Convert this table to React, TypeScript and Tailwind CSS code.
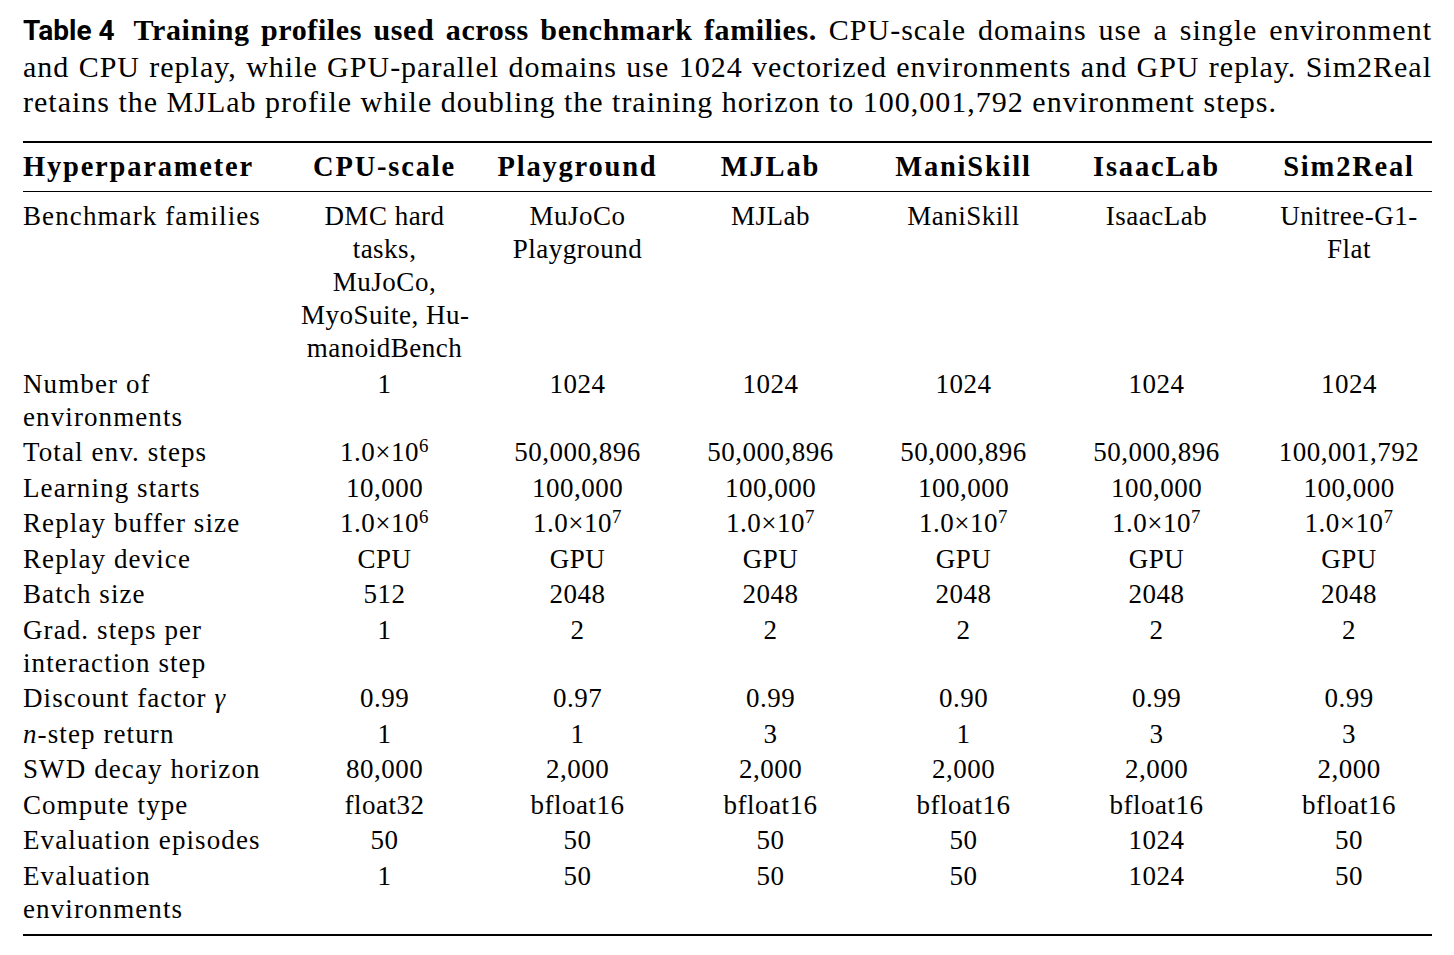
import type { ReactNode } from "react";

type Row = {
  label: ReactNode;
  values: ReactNode[];
};

const sci = (exp: number) => (
  <>
    1.0×10<sup className="text-[0.7em]">{exp}</sup>
  </>
);

const rows: Row[] = [
  {
    label: "Benchmark families",
    values: [
      <>
        DMC hard
        <br />
        tasks,
        <br />
        MuJoCo,
        <br />
        MyoSuite, Hu-
        <br />
        manoidBench
      </>,
      <>
        MuJoCo
        <br />
        Playground
      </>,
      "MJLab",
      "ManiSkill",
      "IsaacLab",
      <>
        Unitree-G1-
        <br />
        Flat
      </>,
    ],
  },
  {
    label: (
      <>
        Number of
        <br />
        environments
      </>
    ),
    values: ["1", "1024", "1024", "1024", "1024", "1024"],
  },
  {
    label: "Total env. steps",
    values: [sci(6), "50,000,896", "50,000,896", "50,000,896", "50,000,896", "100,001,792"],
  },
  {
    label: "Learning starts",
    values: ["10,000", "100,000", "100,000", "100,000", "100,000", "100,000"],
  },
  {
    label: "Replay buffer size",
    values: [sci(6), sci(7), sci(7), sci(7), sci(7), sci(7)],
  },
  {
    label: "Replay device",
    values: ["CPU", "GPU", "GPU", "GPU", "GPU", "GPU"],
  },
  {
    label: "Batch size",
    values: ["512", "2048", "2048", "2048", "2048", "2048"],
  },
  {
    label: (
      <>
        Grad. steps per
        <br />
        interaction step
      </>
    ),
    values: ["1", "2", "2", "2", "2", "2"],
  },
  {
    label: (
      <>
        Discount factor <i>γ</i>
      </>
    ),
    values: ["0.99", "0.97", "0.99", "0.90", "0.99", "0.99"],
  },
  {
    label: (
      <>
        <i>n</i>-step return
      </>
    ),
    values: ["1", "1", "3", "1", "3", "3"],
  },
  {
    label: "SWD decay horizon",
    values: ["80,000", "2,000", "2,000", "2,000", "2,000", "2,000"],
  },
  {
    label: "Compute type",
    values: ["float32", "bfloat16", "bfloat16", "bfloat16", "bfloat16", "bfloat16"],
  },
  {
    label: "Evaluation episodes",
    values: ["50", "50", "50", "50", "1024", "50"],
  },
  {
    label: (
      <>
        Evaluation
        <br />
        environments
      </>
    ),
    values: ["1", "50", "50", "50", "1024", "50"],
  },
];

const headers = ["CPU-scale", "Playground", "MJLab", "ManiSkill", "IsaacLab", "Sim2Real"];

export default function App() {
  return (
    <div className="min-h-screen bg-white pl-[23px] pr-[22px] pt-[12px] text-black font-['Liberation_Serif',serif]">
      <div className="text-[30px] leading-[35.5px] tracking-[1px]">
        <div className="text-justify [text-align-last:justify]">
          <span className="mr-[19px] inline-block font-['Roboto',sans-serif] text-[28px] font-bold tracking-normal">
            Table 4
          </span>
          <span className="font-bold tracking-[0.6px]">
            Training profiles used across benchmark families.
          </span>{" "}
          CPU-scale domains use a single environment
        </div>
        <div className="text-justify [text-align-last:justify]">
          and CPU replay, while GPU-parallel domains use 1024 vectorized environments and GPU replay. Sim2Real
        </div>
        <div>
          retains the MJLab profile while doubling the training horizon to 100,001,792 environment steps.
        </div>
      </div>

      <table className="mt-[21.5px] w-[1409px] table-fixed border-collapse border-y-2 border-black text-[27px] leading-[33px] tracking-[0.5px]">
        <colgroup>
          <col className="w-[265px]" />
          <col className="w-[193px]" />
          <col className="w-[193px]" />
          <col className="w-[193px]" />
          <col className="w-[193px]" />
          <col className="w-[193px]" />
          <col className="w-[179px]" />
        </colgroup>
        <thead>
          <tr className="border-b border-black text-[28.5px] font-bold tracking-[1.8px]">
            <th className="pb-[8px] pr-[13px] pt-[7px] text-left font-bold">Hyperparameter</th>
            {headers.map((h, i) => (
              <th
                key={h}
                className={`pb-[8px] pt-[7px] text-center font-bold whitespace-nowrap ${
                  i === headers.length - 1 ? "pl-[13px]" : "px-[13px]"
                }`}
              >
                {h}
              </th>
            ))}
          </tr>
        </thead>
        <tbody>
          {rows.map((row, r) => (
            <tr key={r} className="align-top">
              <td
                className={`pr-[13px] text-left whitespace-nowrap tracking-[1.1px] ${
                  r === 0 ? "pt-[8px]" : "pt-[1.25px]"
                } ${r === rows.length - 1 ? "pb-[8px]" : "pb-[1.25px]"}`}
              >
                {row.label}
              </td>
              {row.values.map((v, i) => (
                <td
                  key={i}
                  className={`text-center whitespace-nowrap ${
                    i === row.values.length - 1 ? "pl-[13px]" : "px-[13px]"
                  } ${r === 0 ? "pt-[8px]" : "pt-[1.25px]"} ${
                    r === rows.length - 1 ? "pb-[8px]" : "pb-[1.25px]"
                  }`}
                >
                  {v}
                </td>
              ))}
            </tr>
          ))}
        </tbody>
      </table>
    </div>
  );
}
